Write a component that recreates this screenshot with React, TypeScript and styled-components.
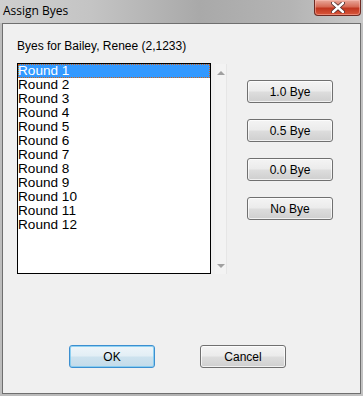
import React from "react";
import styled, { createGlobalStyle } from "styled-components";

const GlobalStyle = createGlobalStyle`
  html, body {
    margin: 0;
    padding: 0;
    background: #ffffff;
  }
  * {
    box-sizing: border-box;
  }
`;

const rounds = Array.from({ length: 12 }, (_, i) => `Round ${i + 1}`);
const byeOptions = ["1.0 Bye", "0.5 Bye", "0.0 Bye", "No Bye"];

const App: React.FC = () => {
  return (
    <>
      <GlobalStyle />
      <Window>
        <TitleBar>
          <Title>Assign Byes</Title>
          <CloseButton>
            <svg width="14" height="11" viewBox="0 0 14 11">
              <path
                d="M2 1 L12 10 M12 1 L2 10"
                stroke="#4a2a2a"
                strokeWidth="4"
                strokeLinecap="round"
              />
              <path
                d="M2 1 L12 10 M12 1 L2 10"
                stroke="#ffffff"
                strokeWidth="2.4"
                strokeLinecap="round"
              />
            </svg>
          </CloseButton>
        </TitleBar>
        <Client>
          <Label>Byes for Bailey, Renee (2,1233)</Label>
          <Body>
            <ListBox>
              {rounds.map((r, i) => (
                <ListItem key={r} $selected={i === 0}>
                  {r}
                </ListItem>
              ))}
            </ListBox>
            <ScrollTrack>
              <Arrow $up />
              <Arrow />
            </ScrollTrack>
            <ButtonColumn>
              {byeOptions.map((b) => (
                <PushButton key={b}>{b}</PushButton>
              ))}
            </ButtonColumn>
          </Body>
          <Footer>
            <PushButton $default>OK</PushButton>
            <PushButton>Cancel</PushButton>
          </Footer>
        </Client>
      </Window>
    </>
  );
};

export default App;

const Window = styled.div`
  width: 363px;
  height: 396px;
  display: flex;
  flex-direction: column;
  padding: 0 2px 2px 2px;
  background: linear-gradient(90deg, #bdbdbd 0%, #b2b2b2 50%, #c2c2c2 100%);
  font-family: "Liberation Sans", Arial, sans-serif;
`;

const TitleBar = styled.div`
  position: relative;
  height: 23px;
  display: flex;
  align-items: flex-start;
  margin: 0 -2px;
  padding: 3px 0 0 3px;
  background: linear-gradient(
    90deg,
    #cfcfcf 0%,
    #c4c4c4 25%,
    #a9a9a9 55%,
    #b4b4b4 80%,
    #c9c9c9 100%
  );
`;

const Title = styled.div`
  font-family: "Open Sans", "Liberation Sans", sans-serif;
  font-size: 12px;
  line-height: 16px;
  color: #000000;
`;

const CloseButton = styled.div`
  position: absolute;
  top: 0;
  left: 314px;
  width: 47px;
  height: 16px;
  display: flex;
  align-items: center;
  justify-content: center;
  border: 1px solid #6d2a22;
  border-top: none;
  border-radius: 0 0 4px 4px;
  background: linear-gradient(180deg, #e9a99b 0%, #d66a55 45%, #c0361f 55%, #d9573b 100%);
  box-shadow: inset 0 0 0 1px rgba(255, 200, 190, 0.45);
`;

const Client = styled.div`
  flex: 1;
  display: flex;
  flex-direction: column;
  padding: 15px 0 0 14px;
  background: #f0f0f0;
  border: 1px solid #6f6f6f;
`;

const Label = styled.div`
  font-size: 12px;
  line-height: 14px;
  color: #000000;
  white-space: nowrap;
`;

const Body = styled.div`
  display: flex;
  align-items: flex-start;
  margin-top: 10px;
`;

const ListBox = styled.div`
  width: 194px;
  height: 211px;
  background: #ffffff;
  border: 1px solid #000000;
  display: flex;
  flex-direction: column;
`;

const ListItem = styled.div<{ $selected?: boolean }>`
  height: 14px;
  font-size: 13.6px;
  line-height: 14px;
  color: ${(p) => (p.$selected ? "#ffffff" : "#000000")};
  background: ${(p) => (p.$selected ? "#3399ff" : "transparent")};
  outline: ${(p) => (p.$selected ? "1px dotted #c8641e" : "none")};
  outline-offset: -1px;
  white-space: nowrap;
`;

const ScrollTrack = styled.div`
  width: 12px;
  height: 210px;
  margin: 1px 0 0 4px;
  background: #f3f3f3;
  border-right: 1px solid #e6e6e6;
  display: flex;
  flex-direction: column;
  justify-content: space-between;
  align-items: center;
  padding: 7px 0 6px;
`;

const Arrow = styled.div<{ $up?: boolean }>`
  width: 0;
  height: 0;
  border-left: 4px solid transparent;
  border-right: 4px solid transparent;
  ${(p) =>
    p.$up
      ? "border-bottom: 4px solid #a0a0a0;"
      : "border-top: 4px solid #a0a0a0;"}
`;

const ButtonColumn = styled.div`
  display: flex;
  flex-direction: column;
  gap: 16px;
  margin-left: 20px;
  padding-top: 17px;
`;

const PushButton = styled.div<{ $default?: boolean }>`
  width: 86px;
  height: 23px;
  display: flex;
  align-items: center;
  justify-content: center;
  font-size: 12px;
  color: #000000;
  border-radius: 3px;
  border: 1px solid ${(p) => (p.$default ? "#3c8fd0" : "#707070")};
  background: ${(p) =>
    p.$default
      ? "linear-gradient(180deg, #eef5f9 0%, #e2eef5 48%, #cde2ee 52%, #c3dbe9 100%)"
      : "linear-gradient(180deg, #f4f4f4 0%, #ebebeb 48%, #dddddd 52%, #cfcfcf 100%)"};
  box-shadow: inset 0 0 0 1px
    ${(p) => (p.$default ? "rgba(120, 200, 240, 0.8)" : "rgba(255, 255, 255, 0.7)")};
`;

const Footer = styled.div`
  display: flex;
  gap: 45px;
  margin: 71px 0 0 52px;
`;
